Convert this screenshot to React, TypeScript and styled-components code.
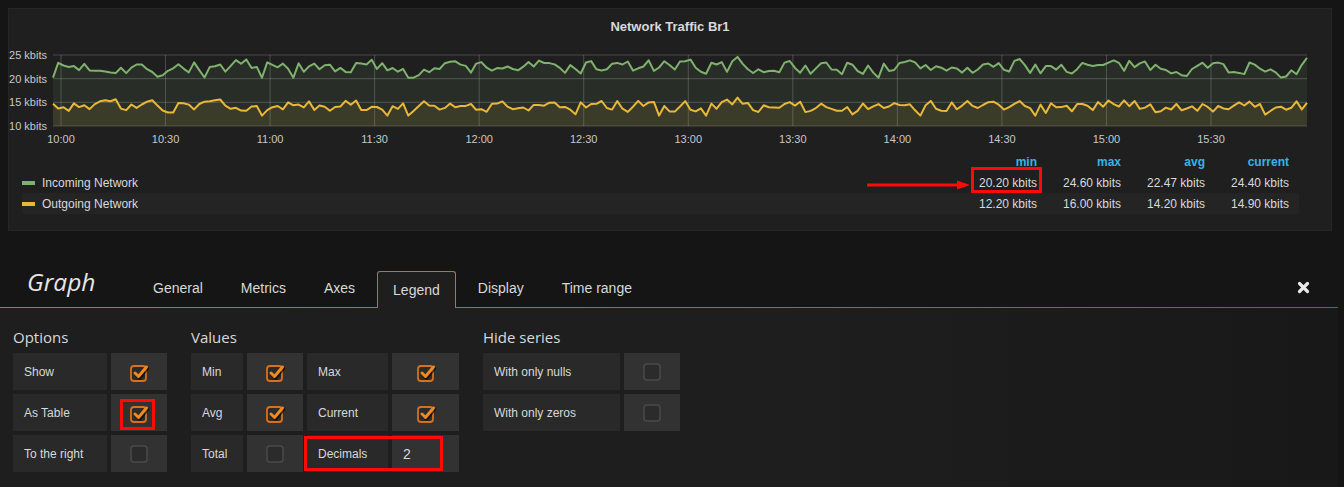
import React from 'react';
import styled, { createGlobalStyle, css } from 'styled-components';

const GlobalStyle = createGlobalStyle`
  html, body {
    margin: 0;
    padding: 0;
    background: #151515;
    font-family: 'Liberation Sans', Arial, sans-serif;
    color: #d8d9da;
  }
`;

const Page = styled.div`
  display: flex;
  flex-direction: column;
  height: 100vh;
  overflow: hidden;
`;

/* ---------- graph panel ---------- */

const Panel = styled.section`
  margin: 8px 12px 0 8px;
  background: #1f1f20;
  border: 1px solid #262627;
  padding-bottom: 16px;
`;

const PanelTitle = styled.h2`
  margin: 0;
  padding-top: 9px;
  line-height: 18px;
  font-size: 13px;
  font-weight: bold;
  text-align: center;
  color: #d8d9da;
`;

const ChartSvg = styled.svg`
  display: block;
`;

const LegendWrap = styled.div`
  position: relative;
  margin: 0 32px 0 13px;
`;

const LegendTable = styled.table`
  width: 100%;
  border-collapse: collapse;
  font-size: 12px;

  tbody tr:nth-child(even) {
    background: #242425;
  }
`;

const HeadCell = styled.th<{ $first?: boolean }>`
  height: 21px;
  padding: 0 10px 0 0;
  width: ${(p) => (p.$first ? 'auto' : '74px')};
  text-align: right;
  font-weight: bold;
  color: #33b5e5;
`;

const NameCell = styled.td`
  height: 21px;
  padding: 0;
  white-space: nowrap;
`;

const Swatch = styled.span<{ $color: string }>`
  display: inline-block;
  width: 13px;
  height: 4px;
  margin-right: 7px;
  vertical-align: middle;
  background: ${(p) => p.$color};
`;

const ValueCell = styled.td<{ $marked?: boolean }>`
  position: relative;
  padding: 0 10px 0 0;
  text-align: right;
  white-space: nowrap;

  ${(p) =>
    p.$marked &&
    css`
      &::after {
        content: '';
        position: absolute;
        width: 71px;
        box-sizing: border-box;
        right: 5px;
        top: -5px;
        bottom: 0;
        border: 3px solid #ff0a0a;
      }
    `}
`;

const Arrow = styled.svg`
  position: absolute;
  left: 845px;
  top: 28px;
`;

/* ---------- editor ---------- */

const Editor = styled.div`
  flex: 1;
  display: flex;
  flex-direction: column;
  margin-right: 6px;
`;

const TabBar = styled.div`
  display: flex;
  align-items: flex-end;
  height: 77px;
  box-sizing: border-box;
  border-bottom: 1px solid transparent;
  border-image: linear-gradient(to right, #b07a22, #b5661d 50%, #b8431a) 1;
`;

const EditorTitle = styled.div`
  width: 137px;
  box-sizing: border-box;
  padding-left: 27px;
  margin-bottom: 9px;
  font-family: 'Open Sans', sans-serif;
  font-style: italic;
  font-size: 24.5px;
  line-height: 32px;
  color: #e6e6e6;
`;

const Tabs = styled.ul`
  display: flex;
  gap: 6px;
  margin: 0;
  padding: 0;
  list-style: none;
`;

const Tab = styled.li<{ $active?: boolean }>`
  height: 36px;
  box-sizing: border-box;
  padding: ${(p) => (p.$active ? '8px' : '6px')} 15px 0;
  line-height: 20px;
  font-size: 14px;
  color: #d8d9da;
  border: 1px solid transparent;
  border-bottom: none;
  border-radius: 3px 3px 0 0;

  ${(p) =>
    p.$active &&
    css`
      height: 37px;
      margin-bottom: -1px;
      background: #1f1e1f;
      border-color: #b8771f;
    `}
`;

const CloseButton = styled.div`
  margin-left: auto;
  margin-right: 28px;
  margin-bottom: 14px;
  width: 13px;
  height: 13px;
`;

const EditorBody = styled.div`
  flex: 1;
  display: flex;
  gap: 24px;
  padding: 19px 13px 0;
  background: linear-gradient(to right, #1f1e1f, #1f1e1f 60%, #181818);
`;

const Section = styled.div``;

const SectionTitle = styled.h5`
  margin: 0 0 6px;
  font-family: 'Open Sans', sans-serif;
  font-weight: 400;
  font-size: 15px;
  line-height: 20px;
  color: #d8d9da;
`;

const FormGrid = styled.div<{ $columns: string }>`
  display: grid;
  grid-template-columns: ${(p) => p.$columns};
  grid-auto-rows: 37px;
  column-gap: 4px;
  row-gap: 4px;
`;

const Label = styled.div<{ $marked?: boolean }>`
  position: relative;
  display: flex;
  align-items: center;
  padding-left: 11px;
  background: #292929;
  font-size: 12px;
  color: #d8d9da;

  ${(p) =>
    p.$marked &&
    css`
      &::after {
        content: '';
        position: absolute;
        z-index: 2;
        left: -3px;
        top: 1px;
        bottom: 1px;
        width: 133px;
        border: 3px solid #ff0a0a;
      }
    `}
`;

const CheckCell = styled.div<{ $marked?: boolean }>`
  position: relative;
  display: flex;
  align-items: center;
  justify-content: center;
  background: #323232;

  ${(p) =>
    p.$marked &&
    css`
      &::after {
        content: '';
        position: absolute;
        left: 9px;
        right: 12px;
        top: 5px;
        bottom: 1px;
        border: 3px solid #ff0a0a;
      }
    `}
`;

const InputCell = styled.div`
  display: flex;
  align-items: center;
  padding-left: 11px;
  background: #323232;
  font-size: 14px;
  color: #d8d9da;
`;

/* ---------- chart data ---------- */

function mulberry(seed: number) {
  return () => {
    seed = (seed + 0x6d2b79f5) | 0;
    let t = Math.imul(seed ^ (seed >>> 15), 1 | seed);
    t = (t + Math.imul(t ^ (t >>> 7), 61 | t)) ^ t;
    return ((t ^ (t >>> 14)) >>> 0) / 4294967296;
  };
}

function makeSeries(seed: number, mean: number, amp: number, min: number, max: number, last: number, n: number) {
  const r = mulberry(seed);
  const out: number[] = [];
  let prev = mean;
  for (let i = 0; i < n; i++) {
    let v = prev * 0.25 + (mean + (r() - 0.5) * 2 * amp) * 0.75;
    if (r() < 0.08) v -= amp * 0.8;
    v = Math.max(min, Math.min(max, v));
    out.push(v);
    prev = v;
  }
  out[40] = min;
  out[131] = max;
  out[n - 1] = last;
  return out;
}

const N = 241;
const PLOT_L = 44;
const PLOT_R = 1298;
const PLOT_T = 19;
const PLOT_B = 90;
const xAt = (i: number) => PLOT_L + (i * (PLOT_R - PLOT_L)) / (N - 1);
const yAt = (v: number) => PLOT_B - ((v - 10) / 15) * (PLOT_B - PLOT_T);

const incoming = makeSeries(7, 22.5, 2.0, 20.2, 24.6, 24.4, N);
const outgoing = makeSeries(31, 14.3, 1.6, 12.2, 16.0, 14.9, N);

function linePath(data: number[]) {
  return data.map((v, i) => `${i ? 'L' : 'M'}${xAt(i).toFixed(1)} ${yAt(v).toFixed(1)}`).join(' ');
}

function areaPath(data: number[]) {
  return `${linePath(data)} L${PLOT_R} ${PLOT_B} L${PLOT_L} ${PLOT_B} Z`;
}

const yTicks = [25, 20, 15, 10];
const xTicks = ['10:00', '10:30', '11:00', '11:30', '12:00', '12:30', '13:00', '13:30', '14:00', '14:30', '15:00', '15:30'];

function Chart() {
  return (
    <ChartSvg width={1322} height={115}>
      {yTicks.map((t) => (
        <g key={t}>
          <line x1={PLOT_L} x2={PLOT_R} y1={yAt(t)} y2={yAt(t)} stroke="rgba(255,255,255,0.2)" />
          <text x={38} y={yAt(t) + 4} textAnchor="end" fontSize="11" fill="#c8c8c8" fontFamily="Liberation Sans, Arial, sans-serif">
            {t} kbits
          </text>
        </g>
      ))}
      {xTicks.map((t, i) => {
        const x = 52 + i * 104.545;
        return (
          <g key={t}>
            <line x1={x} x2={x} y1={PLOT_T} y2={PLOT_B} stroke="rgba(255,255,255,0.2)" />
            <text x={x} y={107} textAnchor="middle" fontSize="11" fill="#c8c8c8" fontFamily="Liberation Sans, Arial, sans-serif">
              {t}
            </text>
          </g>
        );
      })}
      <path d={areaPath(incoming)} fill="rgba(126,178,109,0.1)" />
      <path d={areaPath(outgoing)} fill="rgba(234,184,57,0.1)" />
      <path d={linePath(incoming)} fill="none" stroke="#7eb26d" strokeWidth="2" strokeLinejoin="round" />
      <path d={linePath(outgoing)} fill="none" stroke="#eab839" strokeWidth="2" strokeLinejoin="round" />
    </ChartSvg>
  );
}

/* ---------- checkbox ---------- */

function CheckIcon({ checked }: { checked: boolean }) {
  if (!checked) {
    return (
      <svg width="18" height="18" viewBox="0 0 18 18">
        <rect x="1" y="1" width="16" height="16" rx="3" fill="#2b2b2b" stroke="#4a4a4a" strokeWidth="1.5" />
      </svg>
    );
  }
  return (
    <svg width="22" height="22" viewBox="0 0 22 22">
      <rect x="3" y="5" width="15" height="15" rx="3" fill="#2d2b29" stroke="#d9701a" strokeWidth="1.8" />
      <path d="M7 12 L10.5 15.5 L18.5 6" fill="none" stroke="rgba(0,0,0,0.6)" strokeWidth="3.4" strokeLinecap="round" strokeLinejoin="round" transform="translate(1 1.5)" />
      <path d="M7 12 L10.5 15.5 L18.5 6" fill="none" stroke="#f08a1f" strokeWidth="3" strokeLinecap="round" strokeLinejoin="round" />
    </svg>
  );
}

const legendRows = [
  { name: 'Incoming Network', color: '#7eb26d', values: ['20.20 kbits', '24.60 kbits', '22.47 kbits', '24.40 kbits'] },
  { name: 'Outgoing Network', color: '#eab839', values: ['12.20 kbits', '16.00 kbits', '14.20 kbits', '14.90 kbits'] },
];

const tabs = ['General', 'Metrics', 'Axes', 'Legend', 'Display', 'Time range'];

export default function App() {
  return (
    <Page>
      <GlobalStyle />
      <Panel>
        <PanelTitle>Network Traffic Br1</PanelTitle>
        <Chart />
        <LegendWrap>
          <LegendTable>
            <thead>
              <tr>
                <HeadCell $first />
                <HeadCell>min</HeadCell>
                <HeadCell>max</HeadCell>
                <HeadCell>avg</HeadCell>
                <HeadCell>current</HeadCell>
              </tr>
            </thead>
            <tbody>
              {legendRows.map((row, r) => (
                <tr key={row.name}>
                  <NameCell>
                    <Swatch $color={row.color} />
                    {row.name}
                  </NameCell>
                  {row.values.map((v, i) => (
                    <ValueCell key={i} $marked={r === 0 && i === 0}>
                      {v}
                    </ValueCell>
                  ))}
                </tr>
              ))}
            </tbody>
          </LegendTable>
          <Arrow width="104" height="12" viewBox="0 0 104 12">
            <line x1="1" y1="6" x2="92" y2="6" stroke="#ff0a0a" strokeWidth="3" strokeLinecap="round" />
            <path d="M90 1.5 L103 6 L90 10.5 Z" fill="#ff0a0a" />
          </Arrow>
        </LegendWrap>
      </Panel>

      <Editor>
        <TabBar>
          <EditorTitle>Graph</EditorTitle>
          <Tabs>
            {tabs.map((t) => (
              <Tab key={t} $active={t === 'Legend'}>
                {t}
              </Tab>
            ))}
          </Tabs>
          <CloseButton>
            <svg width="13" height="13" viewBox="0 0 13 13">
              <path d="M2.5 2.5 L10.5 10.5 M10.5 2.5 L2.5 10.5" stroke="#e8e8e8" strokeWidth="3.2" strokeLinecap="round" />
            </svg>
          </CloseButton>
        </TabBar>

        <EditorBody>
          <Section>
            <SectionTitle>Options</SectionTitle>
            <FormGrid $columns="94px 56px">
              <Label>Show</Label>
              <CheckCell>
                <CheckIcon checked />
              </CheckCell>
              <Label>As Table</Label>
              <CheckCell $marked>
                <CheckIcon checked />
              </CheckCell>
              <Label>To the right</Label>
              <CheckCell>
                <CheckIcon checked={false} />
              </CheckCell>
            </FormGrid>
          </Section>

          <Section>
            <SectionTitle>Values</SectionTitle>
            <FormGrid $columns="52px 56px 81px 67px">
              <Label>Min</Label>
              <CheckCell>
                <CheckIcon checked />
              </CheckCell>
              <Label>Max</Label>
              <CheckCell>
                <CheckIcon checked />
              </CheckCell>
              <Label>Avg</Label>
              <CheckCell>
                <CheckIcon checked />
              </CheckCell>
              <Label>Current</Label>
              <CheckCell>
                <CheckIcon checked />
              </CheckCell>
              <Label>Total</Label>
              <CheckCell>
                <CheckIcon checked={false} />
              </CheckCell>
              <Label $marked>Decimals</Label>
              <InputCell>2</InputCell>
            </FormGrid>
          </Section>

          <Section>
            <SectionTitle>Hide series</SectionTitle>
            <FormGrid $columns="137px 56px">
              <Label>With only nulls</Label>
              <CheckCell>
                <CheckIcon checked={false} />
              </CheckCell>
              <Label>With only zeros</Label>
              <CheckCell>
                <CheckIcon checked={false} />
              </CheckCell>
            </FormGrid>
          </Section>
        </EditorBody>
      </Editor>
    </Page>
  );
}
